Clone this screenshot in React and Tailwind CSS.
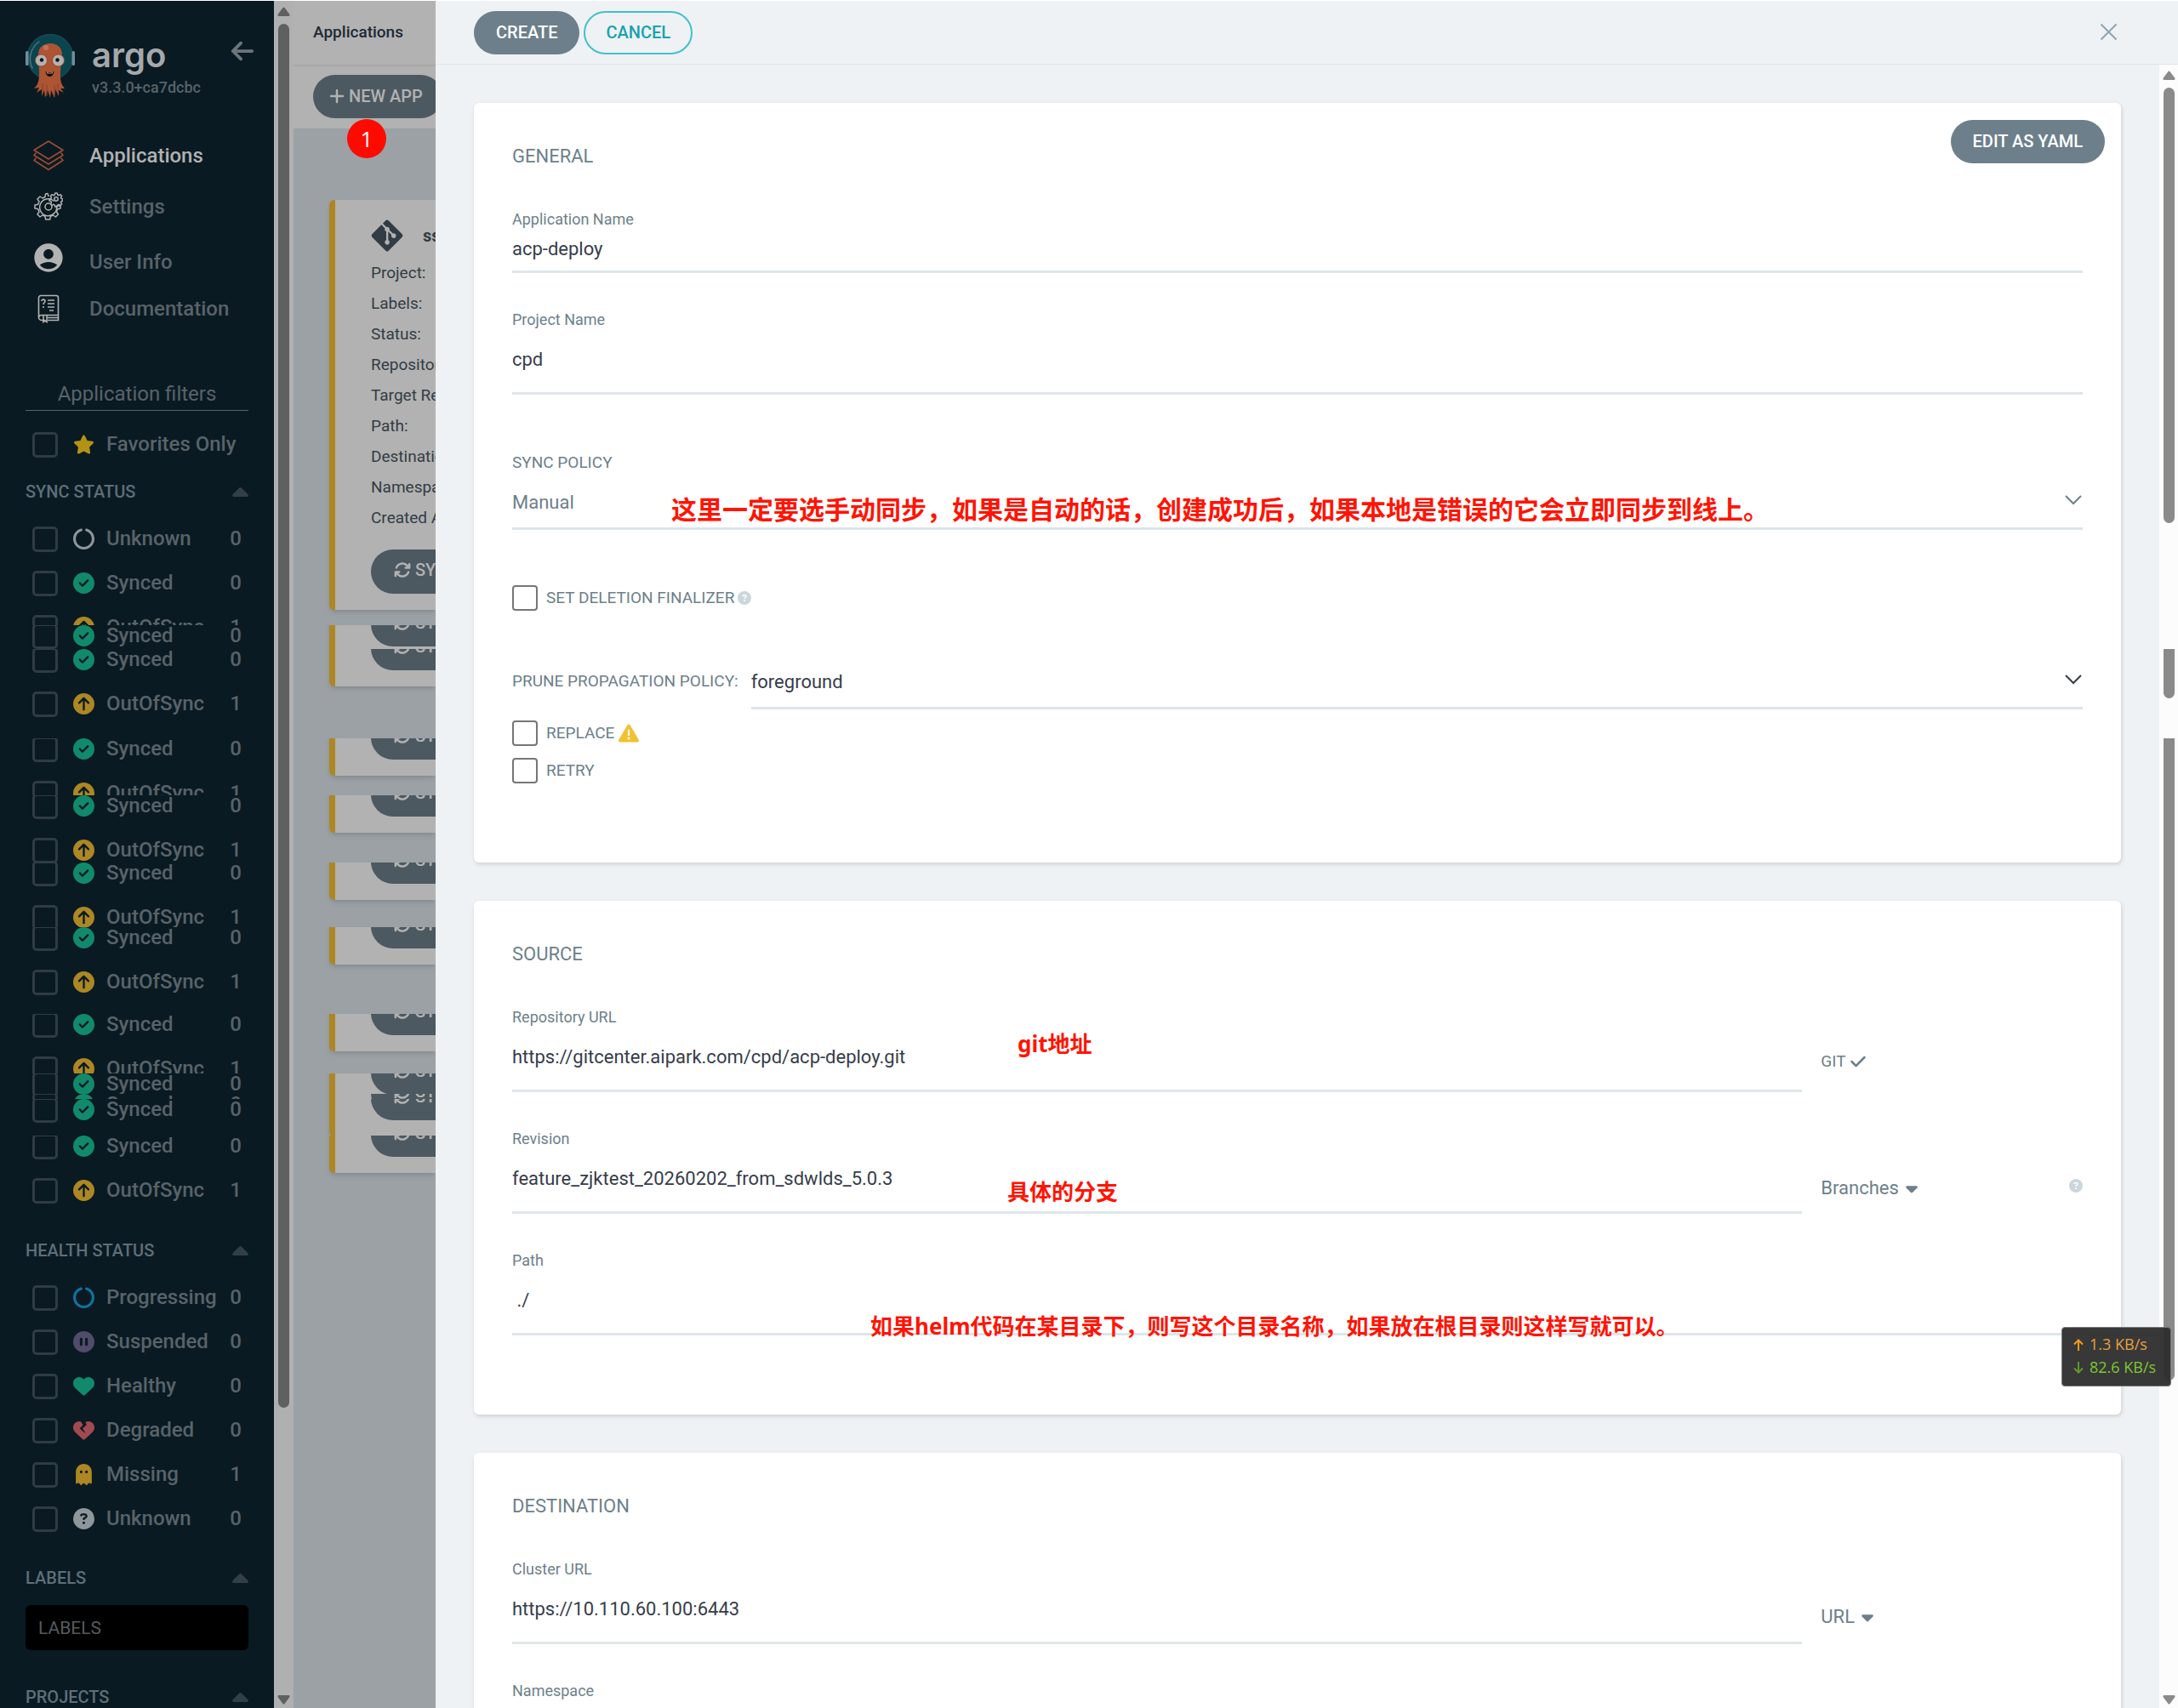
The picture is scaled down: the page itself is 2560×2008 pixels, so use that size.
import React, { useState } from 'react';
import {
  FaArrowLeft,
  FaArrowsRotate,
  FaCaretDown,
  FaCheck,
  FaCircleArrowUp,
  FaCircleCheck,
  FaCircleNotch,
  FaCirclePause,
  FaCircleQuestion,
  FaGhost,
  FaGitAlt,
  FaHeart,
  FaHeartCrack,
  FaPlus,
  FaStar,
  FaTriangleExclamation,
} from 'react-icons/fa6';
import { MdAccountCircle } from 'react-icons/md';

const UNKNOWN = { label: 'Unknown', count: 0, icon: FaCircleNotch, color: 'text-[#8f969b]' };
const SYNCED = { label: 'Synced', count: 0, icon: FaCircleCheck, color: 'text-[#118a6c]' };
const OUT_OF_SYNC = { label: 'OutOfSync', count: 1, icon: FaCircleArrowUp, color: 'text-[#ac8724]' };

const HEALTH = [
  { label: 'Progressing', count: 0, icon: FaCircleNotch, color: 'text-[#0f73a0]' },
  { label: 'Suspended', count: 0, icon: FaCirclePause, color: 'text-[#524c6b]' },
  { label: 'Healthy', count: 0, icon: FaHeart, color: 'text-[#118a6c]' },
  { label: 'Degraded', count: 0, icon: FaHeartCrack, color: 'text-[#a24a51]' },
  { label: 'Missing', count: 1, icon: FaGhost, color: 'text-[#ac8724]' },
  { label: 'Unknown', count: 0, icon: FaCircleQuestion, color: 'text-[#8f969b]' },
];

// Heights of the repeated slices, shared by the sidebar and the list behind the drawer
const SLICES = [28, 105, 67, 79, 76, 102, 70, 24, 6, 43, 120];

const CARD_ROWS = [
  'Project:',
  'Labels:',
  'Status:',
  'Repository:',
  'Target Revision:',
  'Path:',
  'Destination:',
  'Namespace:',
  'Created At:',
];

const ArgoLogo = () => (
  <svg width="58" height="76" viewBox="0 0 58 76" className="shrink-0" aria-hidden="true">
    <circle cx="29" cy="27" r="26.5" fill="#0a454d" stroke="#1b4754" strokeWidth="1.5" />
    <path d="M8 40C3 30 5 17 16 9" fill="none" stroke="#4b7680" strokeWidth="1.5" strokeLinecap="round" />
    <rect x="0" y="20" width="3.5" height="17" rx="1.5" fill="#708d9b" />
    <rect x="54.500" y="20" width="3.500" height="17" rx="1.5" fill="#708d9b" />
    <path
      d="M15 24c0-8 6-13 14-13s14 5 14 13c0 8-2 14-2 21 0 9 0 13 5 19l-5 0 4 5-6-3 0 7-4-8-1 10-4-9-1 9-3-9-3 9-1-9-3 7 0-8-6 4 3-6-6 1c6-5 6-12 6-21 0-7-1-11-1-19z"
      fill="#ad5432"
    />
    <path d="M20 58v12M25 60v13M34 60v14M38 58v10" stroke="#8a3f26" strokeWidth="1" />
    <ellipse cx="24" cy="16" rx="3" ry="3" fill="#c27355" />
    <circle cx="18.500" cy="31" r="7" fill="#b2b2b2" stroke="#9a4a2d" strokeWidth="1" />
    <circle cx="38.500" cy="31" r="7" fill="#b2b2b2" stroke="#9a4a2d" strokeWidth="1" />
    <circle cx="19" cy="30.500" r="2.200" fill="#0a0f14" />
    <circle cx="37.500" cy="30.500" r="2.200" fill="#0a0f14" />
    <path d="M23.500 44c3 2 7 2 10 0-1 8-9 8-10 0z" fill="#14090a" />
    <path d="M25 45c2 1.200 5 1.200 7 0v1.500h-7z" fill="#b2b2b2" />
  </svg>
);

const LayersIcon = () => (
  <svg width="36" height="36" viewBox="0 0 36 36" fill="none" stroke="#9b4d35" strokeWidth="1.6" strokeLinejoin="round" aria-hidden="true">
    <path d="M18 1 35 11.500 18 22 1 11.500z" />
    <path d="M3.500 14.500 1 17.500 18 28l17-10.500-2.500-3" />
    <path d="M3.500 20.500 1 23.500 18 34.500l17-11-2.500-3" />
  </svg>
);

const GearsIcon = () => (
  <svg width="34" height="34" viewBox="0 0 34 34" fill="none" stroke="#b2b2b2" strokeWidth="1.5" strokeLinejoin="round" strokeLinecap="round" aria-hidden="true">
    <path d="M17 4.500 16 1.500l-2.500.5-.5 3.500-3 1.500-3-2-3 3 2 3-1.300 3.300L1 15v4l3.700.7L6 23l-2 3 3 3 3-2 3 1.300.7 3.700h5l.7-3.700 3-1.300 3 2 3-3-2-3 1.300-3.300 3.300-.7v-2.500l-3-1" />
    <path d="M23 10a10 10 0 1 0 3.500 6" />
    <circle cx="17" cy="17" r="4" />
    <circle cx="26" cy="8" r="2.200" />
    <path d="M24.800 1h2.400l.5 2 1.500.7 1.800-1 1.600 1.600-1 1.800.6 1.500 1.900.5v2l-1.900.5-.6 1.500 1 1.800-1.600 1.500-1.800-1-1.500.7-.5 1.900h-2.400l-.5-1.900-1.500-.7-1.800 1-1.600-1.500 1-1.800-.6-1.500-1.900-.5v-2l1.900-.5.6-1.500-1-1.800L21 2.700l1.800 1 1.500-.7z" />
  </svg>
);

const DocsIcon = () => (
  <svg width="26" height="34" viewBox="0 0 26 34" fill="none" stroke="#b2b2b2" strokeWidth="1.6" aria-hidden="true">
    <path d="M9 30.500H5a3.500 3.500 0 0 1-3.500-3.500V4A2.500 2.500 0 0 1 4 1.500h18A2.500 2.500 0 0 1 24.500 4v26.500H12" />
    <path d="M1.500 27A3 3 0 0 1 5 24.500h19.500M12 27.500h12" />
    <path d="M7 25v7.500l2-1.500 2 1.500V25" />
    <path d="M5 8c0-2.500 4-2.500 4 0 0 2-2 1.500-2 4M7 14v2M12 7h8M12 11h8M12 15h8M14 19h5" />
  </svg>
);

const NAV = [
  { label: 'Applications', icon: <LayersIcon />, style: 'text-[#b2b2b2]' },
  { label: 'Settings', icon: <GearsIcon />, style: 'text-[#58636a]' },
  { label: 'User Info', icon: <MdAccountCircle className="size-10 text-[#b2b2b2]" />, style: 'pt-2.5 text-[#58636a]' },
  { label: 'Documentation', icon: <DocsIcon />, style: 'text-[#58636a]' },
];

const Arrow = ({ down }) => (
  <svg width="15" height="11" viewBox="0 0 15 11" fill="currentColor" className="shrink-0" aria-hidden="true">
    {down ? (
      <path d="M1.500 0h12q1.500.6 1 2L8.500 10q-1 1-2 0L.5 2Q0 .6 1.500 0z" />
    ) : (
      <path d="M1.500 11h12q1.500-.6 1-2L8.500 1q-1-1-2 0L.5 9Q0 10.400 1.500 11z" />
    )}
  </svg>
);

const FilterRow = ({ item }) => {
  const Icon = item.icon;
  return (
    <div className="flex h-[52px] items-center justify-between px-2 text-2xl font-medium text-[#58636a]">
      <label className="flex items-center">
        <input
          type="checkbox"
          className="size-[30px] shrink-0 appearance-none rounded-[5px] border-[3px] border-[#2f3b45]"
        />
        <span className="flex items-center pb-0.5 pl-[18px]">
          <Icon className={`size-[25px] shrink-0 ${item.color}`} />
          <span className="pl-[14px] leading-7 whitespace-nowrap">{item.label}</span>
        </span>
      </label>
      {item.count !== undefined && <span className="pb-0.5 leading-7">{item.count}</span>}
    </div>
  );
};

const FilterTitle = ({ children }) => (
  <div className="flex h-[30px] items-center justify-between text-[20px] font-medium text-[#5e6f79]">
    <h3>{children}</h3>
    <svg width="19" height="11" viewBox="0 0 19 11" fill="#333f48" aria-hidden="true">
      <path d="M9.500 0q.8 0 1.500.7l7.500 7.500q1 2-1 2.800h-16q-2-.8-1-2.800L8 .7Q8.700 0 9.500 0z" />
    </svg>
  </div>
);

const Sidebar = () => (
  <aside className="flex w-[322px] shrink-0 flex-col overflow-hidden bg-[#0a1a22] px-[30px]">
    <div className="-mr-2 flex shrink-0 items-start pt-[39px]">
      <ArgoLogo />
      <div className="flex-1 pl-5">
        <div className="h-[50px] font-[Inter] text-[40px] leading-[50px] font-semibold text-[#a5a9ab]">argo</div>
        <div className="text-[18px] leading-[26px] font-medium text-[#58636a]">v3.3.0+ca7dcbc</div>
      </div>
      <button type="button" aria-label="Collapse sidebar" className="mt-[5px] text-[#6b757b]">
        <FaArrowLeft className="size-[30px]" />
      </button>
    </div>

    <nav className="mt-[37px] shrink-0">
      {NAV.map((item) => (
        <a key={item.label} href="#" className="flex h-[60px] items-center">
          <span className="flex w-[75px] justify-center pr-[21px]">{item.icon}</span>
          <span className={`text-2xl leading-7 font-medium ${item.style}`}>{item.label}</span>
        </a>
      ))}
    </nav>

    <h2 className="mt-[55px] shrink-0 border-b border-[#56656c] pb-1 text-center text-2xl leading-[30px] text-[#58636a]">
      Application filters
    </h2>
    <div className="mt-[14px] mb-[14px] shrink-0">
      <FilterRow item={{ label: 'Favorites Only', icon: FaStar, color: 'text-[#b39315]' }} />
    </div>

    <FilterTitle>SYNC STATUS</FilterTitle>
    <div className="mt-[15px] h-[127px] shrink-0 overflow-hidden">
      <FilterRow item={UNKNOWN} />
      <FilterRow item={SYNCED} />
      <FilterRow item={OUT_OF_SYNC} />
    </div>
    {SLICES.map((height, i) => (
      <div key={i} className="shrink-0 overflow-hidden" style={{ height }}>
        <div className="-mt-[13px]">
          <FilterRow item={SYNCED} />
          <FilterRow item={OUT_OF_SYNC} />
        </div>
      </div>
    ))}

    <FilterTitle>HEALTH STATUS</FilterTitle>
    <div className="mt-[15px] mb-7 shrink-0">
      {HEALTH.map((item) => (
        <FilterRow key={item.label} item={item} />
      ))}
    </div>

    <FilterTitle>LABELS</FilterTitle>
    <input
      type="text"
      placeholder="LABELS"
      aria-label="Labels"
      className="mt-[17px] mb-[40px] h-[53px] w-full shrink-0 rounded-md bg-black px-[15px] text-[21px] placeholder:text-[#565b5f]"
    />
    <FilterTitle>PROJECTS</FilterTitle>
  </aside>
);

const SyncButton = () => (
  <button
    type="button"
    className="flex h-[52px] w-[150px] shrink-0 items-center rounded-full bg-[#4c5961] pb-1 pl-[27px] text-[20px] font-medium text-[#b2b2b2]"
  >
    <FaArrowsRotate className="mr-[5px] size-5" />
    SYNC
  </button>
);

const ApplicationList = () => (
  <main className="flex min-w-0 flex-1 flex-col overflow-hidden bg-[#9ba1a5] whitespace-nowrap">
    <div className="flex h-[77px] shrink-0 items-center border-b-2 border-[#a7a7a7] bg-[#b2b2b2] pl-[23px] text-[19px] font-medium text-[#202935]">
      Applications
    </div>
    <div className="relative h-[73px] shrink-0 bg-[#b2b2b2] pt-[10px] pl-[23px]">
      <button
        type="button"
        className="flex h-[51px] w-[152px] items-center rounded-full bg-[#4c5961] pb-0.5 pl-[18px] text-[20px] font-medium text-[#b2b2b2]"
      >
        <FaPlus className="mr-1 size-5" />
        NEW APP
      </button>
      <span className="absolute top-[62px] left-[63px] flex size-[46px] items-center justify-center rounded-full bg-[#ff0a00] font-['Open_Sans'] text-[26px] text-white">
        1
      </span>
    </div>

    <article className="mt-[84px] mb-[18px] ml-[42px] shrink-0 rounded-l-[6px] border-l-[7px] border-[#ac8724] bg-[#b2b2b2] pt-[23px] pb-[19px] pl-[42px] shadow-md">
      <div className="flex h-[37px] items-center">
        <FaGitAlt className="-ml-0.5 size-[42px] shrink-0 text-[#323c44]" />
        <span className="pl-[21px] text-[20px] font-bold text-[#323c44]">ss</span>
      </div>
      <div className="mt-2 mb-[19px] text-[19px] leading-9 text-[#323c44]">
        {CARD_ROWS.map((row) => (
          <div key={row}>{row}</div>
        ))}
      </div>
      <SyncButton />
    </article>

    {SLICES.map((height, i) => (
      <div key={i} className="shrink-0 overflow-hidden pl-[42px]" style={{ height }}>
        <div className="-mt-[27px] rounded-bl-[6px] border-l-[7px] border-[#ac8724] bg-[#b2b2b2] pb-[19px] pl-[42px] shadow-md">
          <SyncButton />
        </div>
      </div>
    ))}
  </main>
);

const Section = ({ title, children }) => (
  <section className="relative mb-[45px] shrink-0 rounded-md bg-white px-[45px] pt-[45px] pb-[93px] shadow-[1px_2px_5px_rgba(0,0,0,0.14)]">
    <h2 className="mb-[45px] text-[22px] leading-[35px] text-[#6d7f8b]">{title}</h2>
    {children}
  </section>
);

const Field = ({ id, label, value, onChange, compact }) => (
  <div className="flex flex-col">
    <label htmlFor={id} className="text-[18px] leading-6 text-[#6d7f8b]">
      {label}
    </label>
    <input
      id={id}
      name={id}
      type="text"
      value={value}
      onChange={onChange}
      className={`w-full border-b-[3px] border-[#dee6e9] text-[22px] text-[#363c4a] outline-none ${
        compact ? 'h-[51px] pb-1' : 'h-[76px] pb-1'
      }`}
    />
  </div>
);

// Field on the left, its kind picker on the right
const SplitRow = ({ children, side }) => (
  <div className="flex">
    <div className="w-10/12 pr-[22px]">{children}</div>
    <div className="flex w-2/12 items-start justify-between text-[#6d7f8b]">{side}</div>
  </div>
);

const Chevron = ({ className }) => (
  <svg width="20" height="12" viewBox="0 0 20 12" fill="none" stroke="currentColor" strokeWidth="2" className={className} aria-hidden="true">
    <path d="M1 1l9 9 9-9" />
  </svg>
);

const Check = ({ children }) => (
  <label className="flex h-[30px] items-center text-[19px] text-[#6d7f8b]">
    <input type="checkbox" className="mr-[10px] size-[30px] appearance-none rounded-[4px] border-2 border-[#767676]" />
    {children}
  </label>
);

const Note = ({ children, className }) => (
  <span
    className={`pointer-events-none absolute font-['Noto_Sans','Noto_Sans_CJK_SC',sans-serif] leading-9 font-bold whitespace-nowrap text-[#ff1405] ${className}`}
  >
    {children}
  </span>
);

const NewAppPanel = () => {
  const [formData, setFormData] = useState({
    appName: 'acp-deploy',
    project: 'cpd',
    repoUrl: 'https://gitcenter.aipark.com/cpd/acp-deploy.git',
    revision: 'feature_zjktest_20260202_from_sdwlds_5.0.3',
    path: ' ./',
    cluster: 'https://10.110.60.100:6443',
    namespace: '',
  });

  const handleChange = (e) => {
    const { name, value } = e.target;
    setFormData((prev) => ({ ...prev, [name]: value }));
  };

  return (
    <div className="flex w-4/5 shrink-0 flex-col bg-[#eef2f4]">
      <header className="flex h-[75px] shrink-0 items-start justify-between border-b border-[#dfe4e7] pt-3 pr-[71px] pl-[45px]">
        <div className="flex gap-[5px] text-[20px] font-medium">
          <button type="button" className="h-[51px] rounded-full bg-[#6d7f8b] px-[26px] pb-0.5 text-white">
            CREATE
          </button>
          <button type="button" className="h-[51px] rounded-full border-2 border-[#43bfcc] px-6 pb-0.5 text-[#16a2b0]">
            CANCEL
          </button>
        </div>
        <button type="button" aria-label="Close" className="mt-[14px] text-[#8fa4b1]">
          <svg width="21" height="21" viewBox="0 0 21 21" fill="none" stroke="currentColor" strokeWidth="2" aria-hidden="true">
            <path d="M1.500 1.500l18 18M19.500 1.500l-18 18" />
          </svg>
        </button>
      </header>

      <div className="flex min-h-0 flex-1">
        <form className="flex min-w-0 flex-1 flex-col overflow-hidden px-[45px] pt-[45px]">
          <Section title="GENERAL">
            <button
              type="button"
              className="absolute top-5 right-[19px] h-[51px] rounded-full bg-[#6d7f8b] px-[26px] pb-0.5 text-[20px] font-medium text-white"
            >
              EDIT AS YAML
            </button>
            <div className="flex flex-col gap-[43px]">
              <Field id="appName" label="Application Name" value={formData.appName} onChange={handleChange} compact />
              <Field id="project" label="Project Name" value={formData.project} onChange={handleChange} />
            </div>

            <div className="relative mt-[68px] mb-[65px] flex flex-col">
              <label htmlFor="syncPolicy" className="text-[19px] leading-6 text-[#6d7f8b]">
                SYNC POLICY
              </label>
              <select
                id="syncPolicy"
                className="h-[67px] w-full appearance-none border-b-[3px] border-[#dee4e9] pt-[5px] text-[22px] text-[#6d7f8b]"
              >
                <option>Manual</option>
                <option>Automatic</option>
              </select>
              <Chevron className="pointer-events-none absolute right-px bottom-[29px] text-[#6d7f8b]" />
              <Note className="top-[49px] left-[187px] text-[30px]">
                这里一定要选手动同步，如果是自动的话，创建成功后，如果本地是错误的它会立即同步到线上。
              </Note>
            </div>

            <Check>
              SET DELETION FINALIZER
              <FaCircleQuestion className="ml-1 size-4 text-[#ccd6dd]" />
            </Check>

            <div className="mt-[50px] mb-[13px] flex items-center">
              <label htmlFor="prunePolicy" className="pr-[15px] text-[19px] whitespace-nowrap text-[#6d7f8b]">
                PRUNE PROPAGATION POLICY:
              </label>
              <div className="relative flex-1">
                <select
                  id="prunePolicy"
                  className="block h-[66px] w-full appearance-none border-b-[3px] border-[#dee4e9] pt-[3px] text-[22px] text-[#363c4a]"
                >
                  <option>foreground</option>
                  <option>background</option>
                  <option>orphan</option>
                </select>
                <Chevron className="pointer-events-none absolute right-px bottom-[29px] text-[#363c4a]" />
              </div>
            </div>
            <div className="flex flex-col gap-[14px]">
              <Check>
                REPLACE
                <FaTriangleExclamation className="ml-[5px] size-6 text-[#f4c030]" />
              </Check>
              <Check>RETRY</Check>
            </div>
          </Section>

          <Section title="SOURCE">
            <div className="flex flex-col gap-[43px]">
              <SplitRow
                side={
                  <span className="flex items-center gap-1 pt-[50px] text-[19px] leading-7">
                    GIT <FaCheck className="size-5" />
                  </span>
                }
              >
                <Field id="repoUrl" label="Repository URL" value={formData.repoUrl} onChange={handleChange} />
              </SplitRow>
              <SplitRow
                side={
                  <>
                    <button type="button" className="flex items-center gap-1 pt-[56px] text-[22px] leading-7">
                      Branches <FaCaretDown className="size-[22px]" />
                    </button>
                    <FaCircleQuestion className="mt-[59px] size-4 text-[#ccd6dd]" />
                  </>
                }
              >
                <Field id="revision" label="Revision" value={formData.revision} onChange={handleChange} />
              </SplitRow>
              <Field id="path" label="Path" value={formData.path} onChange={handleChange} />
            </div>
            <Note className="top-[150px] left-[639px] text-[26px]">git地址</Note>
            <Note className="top-[324px] left-[627px] text-[26px]">具体的分支</Note>
            <Note className="top-[482px] left-[466px] text-[26px]">
              如果helm代码在某目录下，则写这个目录名称，如果放在根目录则这样写就可以。
            </Note>
          </Section>

          <Section title="DESTINATION">
            <div className="flex flex-col gap-[43px]">
              <SplitRow
                side={
                  <button type="button" className="flex items-center gap-1 pt-[54px] text-[22px] leading-7">
                    URL <FaCaretDown className="size-[22px]" />
                  </button>
                }
              >
                <Field id="cluster" label="Cluster URL" value={formData.cluster} onChange={handleChange} />
              </SplitRow>
              <Field id="namespace" label="Namespace" value={formData.namespace} onChange={handleChange} />
            </div>
          </Section>
        </form>

        {/* Scroll track */}
        <div className="flex w-[22px] shrink-0 flex-col items-center bg-[#fcfcfc] pt-[7px] pb-1 text-[#8a8a8a]">
          <Arrow />
          <div className="mt-[9px] h-[512px] w-[13px] shrink-0 rounded-full bg-[#8a8a8a]" />
          <div className="mt-[148px] h-[58px] w-[13px] shrink-0 rounded-b-full bg-[#8a8a8a]" />
          <div className="mt-[47px] mb-auto h-[755px] w-[13px] shrink-0 rounded-b-full bg-[#8a8a8a]" />
          <Arrow down />
        </div>
      </div>
    </div>
  );
};

const NetSpeed = () => (
  <div className="absolute top-[1559px] right-2 flex h-[70px] w-[129px] flex-col justify-center rounded-[4px] border border-[#777] bg-[#2d2d2d]/95 pb-0.5 pl-[13px] font-['Open_Sans'] text-[18px] leading-[27px] whitespace-nowrap">
    <div className="flex items-center gap-[7px] text-[#e5a040]">
      <svg width="12" height="14" viewBox="0 0 12 14" fill="none" stroke="#f09a1a" strokeWidth="2" aria-hidden="true">
        <path d="M6 14V2M1 6.500l5-5 5 5" />
      </svg>
      1.3 KB/s
    </div>
    <div className="flex items-center gap-[7px] text-[#7cc832]">
      <svg width="12" height="14" viewBox="0 0 12 14" fill="none" stroke="#5c9a2c" strokeWidth="2" aria-hidden="true">
        <path d="M6 0v12M1 7.500l5 5 5-5" />
      </svg>
      82.6 KB/s
    </div>
  </div>
);

export default function App() {
  return (
    <div className="relative flex h-screen overflow-hidden border-t border-white bg-[#9ba1a5] font-[Roboto,sans-serif]">
      <div className="flex min-w-0 flex-1 overflow-hidden">
        <Sidebar />
        <div className="flex w-[23px] shrink-0 flex-col items-center bg-[#b0b0b0] pt-[7px] pb-1 text-[#606060]">
          <Arrow />
          <div className="mt-[9px] mb-auto h-[1627px] w-[13px] shrink-0 rounded-full bg-[#606060]" />
          <Arrow down />
        </div>
        <ApplicationList />
      </div>
      <NewAppPanel />
      <NetSpeed />
    </div>
  );
}
